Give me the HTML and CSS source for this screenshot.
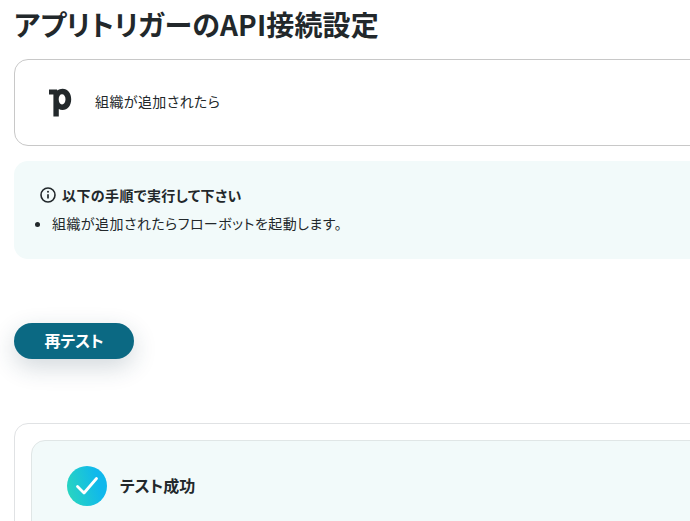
FILE: index.html
```html
<!DOCTYPE html>
<html lang="ja">
<head>
    <meta charset="UTF-8">
    <meta name="viewport" content="width=device-width, initial-scale=1.0">
    <title>アプリトリガーのAPI接続設定</title>
    <link rel="stylesheet" href="styles.css">
</head>
<body>
    <div class="pagina">
        <h1 class="titulo">アプリトリガーのAPI接続設定</h1>

        <div class="app-card">
            <svg class="app-logo" width="24" height="30" viewBox="0 0 24 30">
                <path fill="#22282b" fill-rule="evenodd" d="M1 2.500h8l.4 1C10.800 2.400 12.500 1.700 14.500 1.700c5.200 0 8.700 4.300 8.700 10.600s-3.500 10.700-8.700 10.700c-1.500 0-2.700-.3-3.700-.9V29.500H5.400V7.500H1zM14 7.300c-2 0-3.300 2-3.300 5s1.300 5.100 3.300 5.100 3.500-2.100 3.500-5.100-1.500-5-3.500-5z"/>
            </svg>
            <span class="app-texto">組織が追加されたら</span>
        </div>

        <div class="aviso">
            <div class="aviso-titulo">
                <svg width="16" height="16" viewBox="0 0 16 16">
                    <circle cx="8" cy="8" r="7" fill="none" stroke="#22282b" stroke-width="1.600"/>
                    <circle cx="8" cy="4.800" r="1" fill="#22282b"/>
                    <path d="M8 7.200v4.300" stroke="#22282b" stroke-width="1.700"/>
                </svg>
                <span>以下の手順で実行して下さい</span>
            </div>
            <ul class="aviso-lista">
                <li>組織が追加されたらフローボットを起動します。</li>
            </ul>
        </div>

        <button class="boton">再テスト</button>

        <div class="resultado">
            <div class="resultado-interno">
                <span class="check">
                    <svg width="24" height="20" viewBox="0 0 24 20">
                        <path d="M2.500 10.500l6.500 6.500 12.500-14.500" fill="none" stroke="#fff" stroke-width="2.800" stroke-linecap="round" stroke-linejoin="round"/>
                    </svg>
                </span>
                <span class="resultado-texto">テスト成功</span>
            </div>
        </div>
    </div>
</body>
</html>
```

FILE: styles.css
```css
html, body {
    height: 100%;
    overflow: hidden;
}
body {
    margin: 0;
    background: #fff;
    color: #22282b;
    font-family: "Noto Sans CJK JP", "Noto Sans", sans-serif;
    font-feature-settings: "palt";
}
.pagina {
    width: 900px;
    padding: 0 14px;
}
.titulo {
    margin: 0;
    height: 59px;
    padding-top: 5px;
    box-sizing: border-box;
    font-size: 28px;
    line-height: 38px;
    font-weight: 700;
    letter-spacing: 0.15px;
}
.app-card {
    display: flex;
    align-items: center;
    height: 87px;
    box-sizing: border-box;
    padding-left: 33px;
    border: 1px solid #c8c8c8;
    border-radius: 14px;
}
.app-logo {
    flex: none;
    margin-right: 23px;
    margin-bottom: 1px;
}
.app-texto {
    font-size: 14px;
    line-height: 20px;
    letter-spacing: 0.4px;
    margin-bottom: 3px;
}
.aviso {
    height: 98px;
    box-sizing: border-box;
    margin-top: 15px;
    padding: 24px 26px 0;
    background: #f2fafa;
    border-radius: 14px;
}
.aviso-titulo {
    display: flex;
    align-items: center;
    gap: 6px;
    font-size: 14px;
    line-height: 20px;
    font-weight: 700;
    letter-spacing: 0.4px;
}
.aviso-lista {
    margin: 8px 0 0;
    padding-left: 12px;
    font-size: 14px;
    line-height: 20px;
    letter-spacing: 0.45px;
}
.boton {
    display: block;
    width: 120px;
    height: 36px;
    margin-top: 64px;
    padding: 0 0 2px;
    border: none;
    border-radius: 18px;
    background: #0b6983;
    color: #fff;
    font-family: inherit;
    font-feature-settings: inherit;
    font-size: 16px;
    font-weight: 700;
    box-shadow: 0 8px 24px rgba(30, 60, 80, 0.2);
}
.resultado {
    margin-top: 64px;
    padding: 16px 16px 0;
    height: 200px;
    box-sizing: border-box;
    border: 1px solid #e0e2e4;
    border-radius: 14px;
}
.resultado-interno {
    display: flex;
    align-items: flex-start;
    height: 160px;
    box-sizing: border-box;
    padding: 25px 35px 0;
    background: #f2fafa;
    border: 1px solid #e0e6e6;
    border-radius: 14px;
}
.check {
    display: flex;
    align-items: center;
    justify-content: center;
    width: 40px;
    height: 40px;
    margin-right: 13px;
    border-radius: 50%;
    background: linear-gradient(75deg, #2bd8bb 0%, #10b8ec 75%);
}
.resultado-texto {
    font-size: 16px;
    line-height: 38px;
    font-weight: 700;
}
```
